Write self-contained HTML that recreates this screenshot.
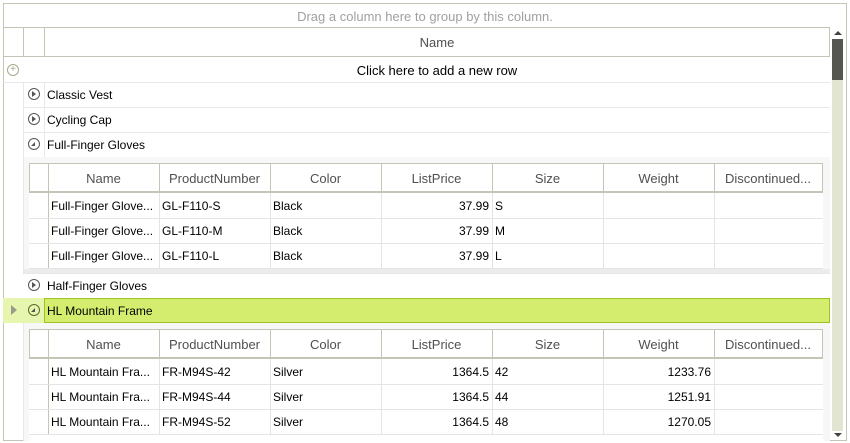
<!DOCTYPE html>
<html><head><meta charset="utf-8"><style>
*{box-sizing:border-box;margin:0;padding:0}
body{width:850px;height:443px;background:#fff;position:relative;overflow:hidden;font-family:"Segoe UI","Liberation Sans",sans-serif;font-size:12px;color:#000}
div{position:absolute}
.t{white-space:nowrap;line-height:25px}
.h{color:#505050;font-size:13px;text-align:center}
.ic{width:12px;height:12px;border:1.3px solid #555;border-radius:50%}
</style></head><body>
<div style="left:3px;top:3px;width:844px;height:438px;border:1px solid #c5c5b5"></div>
<div class="t" style="left:3px;top:5px;width:844px;text-align:center;color:#a0a0a0;font-size:13px;line-height:24px">Drag a column here to group by this column.</div>
<div style="left:3px;top:27px;width:827px;height:30px;border:1px solid #c5c5b5;border-left:none"></div>
<div style="left:23px;top:27px;width:1px;height:30px;background:#c5c5b5"></div>
<div style="left:44px;top:27px;width:1px;height:30px;background:#c5c5b5"></div>
<div class="t h" style="left:44px;top:30px;width:786px">Name</div>
<div style="left:7px;top:64px;width:12px;height:12px;border:1px solid #a8a890;border-radius:50%;color:#a8a890;font-size:10px;line-height:10px;text-align:center">+</div>
<div class="t" style="left:44px;top:58px;width:786px;text-align:center;font-size:13px">Click here to add a new row</div>
<div style="left:3px;top:82px;width:827px;height:1px;background:#e8e8e8"></div>
<div style="left:23px;top:82px;width:1px;height:191px;background:#e8e8e8"></div>
<div style="left:44px;top:82px;width:1px;height:75px;background:#e8e8e8"></div>
<div class="ic" style="left:28px;top:88px"></div><div style="left:32px;top:91px;border-left:4px solid #555;border-top:3px solid transparent;border-bottom:3px solid transparent"></div>
<div class="t" style="left:47px;top:83px">Classic Vest</div>
<div style="left:23px;top:107px;width:807px;height:1px;background:#e8e8e8"></div>
<div class="ic" style="left:28px;top:113px"></div><div style="left:32px;top:116px;border-left:4px solid #555;border-top:3px solid transparent;border-bottom:3px solid transparent"></div>
<div class="t" style="left:47px;top:108px">Cycling Cap</div>
<div style="left:23px;top:132px;width:807px;height:1px;background:#e8e8e8"></div>
<div class="ic" style="left:28px;top:138px"></div><div style="left:31px;top:142px;border-right:4px solid #555;border-top:4px solid transparent"></div>
<div class="t" style="left:47px;top:133px">Full-Finger Gloves</div>
<div style="left:24px;top:157px;width:806px;height:116px;background:#f7f7f7"></div>
<div style="left:24px;top:269px;width:806px;height:4px;background:#ececec"></div>
<div style="left:29px;top:163px;width:794px;height:106px;background:#fff"></div>
<div id="d1"></div>
<div style="left:23px;top:273px;width:807px;height:1px;background:#e8e8e8"></div>
<div class="ic" style="left:28px;top:279px"></div><div style="left:32px;top:282px;border-left:4px solid #555;border-top:3px solid transparent;border-bottom:3px solid transparent"></div>
<div class="t" style="left:47px;top:274px">Half-Finger Gloves</div>
<div style="left:3px;top:298px;width:41px;height:25px;background:#e6f6ae"></div>
<div style="left:44px;top:298px;width:786px;height:25px;background:#d4ed6f;border:1px solid #9cc31e"></div>
<div style="left:11px;top:305px;border-left:6px solid #9a9a8a;border-top:5px solid transparent;border-bottom:5px solid transparent"></div>
<div class="ic" style="left:28px;top:304px;border-color:#5a6a2a"></div><div style="left:31px;top:308px;border-right:4px solid #555;border-top:4px solid transparent"></div>
<div class="t" style="left:47px;top:299px">HL Mountain Frame</div>
<div style="left:23px;top:323px;width:1px;height:118px;background:#e8e8e8"></div>
<div style="left:24px;top:323px;width:806px;height:118px;background:#f7f7f7"></div>
<div style="left:29px;top:329px;width:794px;height:112px;background:#fff"></div>
<div id="d2"></div>
<div style="left:832px;top:28px;width:12px;height:412px;background:#fff"></div>
<div style="left:832px;top:39px;width:11px;height:392px;background:#e3e5d3"></div>
<div style="left:832px;top:39px;width:11px;height:41px;background:#56574f"></div>
<div style="left:834px;top:31px;border-bottom:4px solid #444;border-left:4px solid transparent;border-right:4px solid transparent"></div>
<div style="left:834px;top:433px;border-top:4px solid #444;border-left:4px solid transparent;border-right:4px solid transparent"></div>
<script>
function tbl(id,top,rows){
 var x=[29,48,159,270,381,492,603,714,822];
 var names=["Name","ProductNumber","Color","ListPrice","Size","Weight","Discontinued..."];
 var h='';
 h+='<div style="left:29px;top:'+top+'px;width:794px;height:30px;border:1px solid #c5c5b5;border-bottom:2px solid #c5c5b5"></div>';
 for(var i=1;i<8;i++){h+='<div style="left:'+x[i]+'px;top:'+top+'px;width:1px;height:'+(30+rows.length*25)+'px;background:'+(i==1?'#c5c5b5':'#e4e4e4')+'"></div>';
  h+='<div style="left:'+x[i]+'px;top:'+top+'px;width:1px;height:30px;background:#c5c5b5"></div>';}
 for(var i=0;i<7;i++)h+='<div class="t h" style="left:'+x[i+1]+'px;top:'+(top+3)+'px;width:'+(x[i+2]-x[i+1])+'px">'+names[i]+'</div>';
 rows.forEach(function(r,k){var y=top+30+k*25;
  h+='<div style="left:29px;top:'+(y+25)+'px;width:794px;height:1px;background:#e4e4e4"></div>';
  r.forEach(function(c,j){if(!c)return;var ra=(j==3||j==5);
   h+='<div class="t" style="left:'+(x[j+1]+3)+'px;top:'+(y+1)+'px;width:'+(x[j+2]-x[j+1]-6)+'px;overflow:hidden;text-align:'+(ra?'right':'left')+'">'+c+'</div>';});
 });
 document.getElementById(id).outerHTML=h;
}
tbl('d1',163,[["Full-Finger Glove...","GL-F110-S","Black","37.99","S","",""],["Full-Finger Glove...","GL-F110-M","Black","37.99","M","",""],["Full-Finger Glove...","GL-F110-L","Black","37.99","L","",""]]);
tbl('d2',329,[["HL Mountain Fra...","FR-M94S-42","Silver","1364.5","42","1233.76",""],["HL Mountain Fra...","FR-M94S-44","Silver","1364.5","44","1251.91",""],["HL Mountain Fra...","FR-M94S-52","Silver","1364.5","48","1270.05",""]]);
</script>
</body></html>
